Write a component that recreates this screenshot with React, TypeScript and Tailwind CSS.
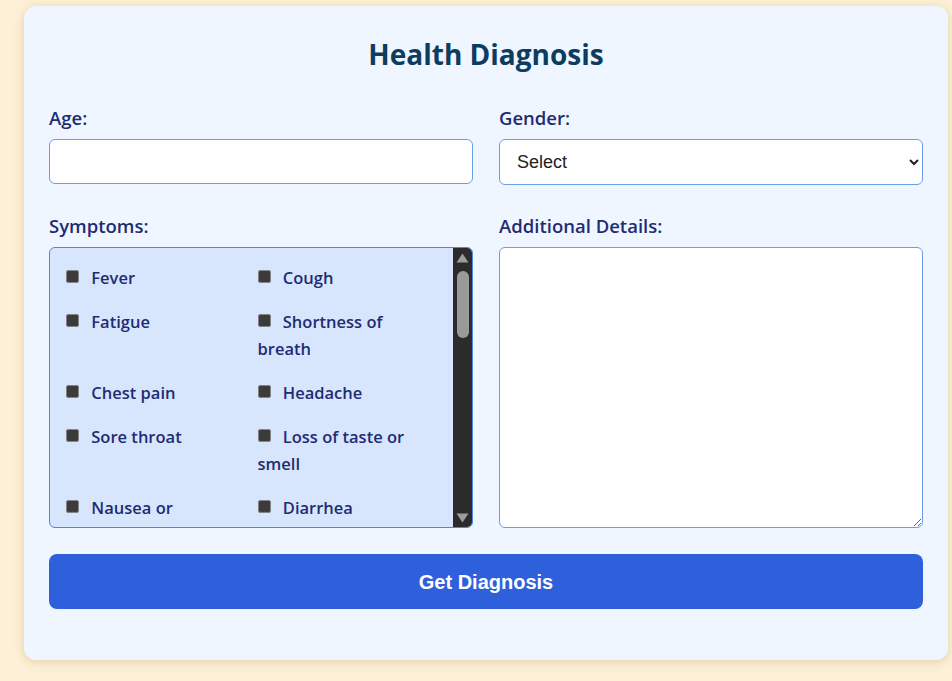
import React from 'react'

const symptoms = [
 'Fever',
 'Cough',
 'Fatigue',
 'Shortness of breath',
 'Chest pain',
 'Headache',
 'Sore throat',
 'Loss of taste or smell',
 'Nausea or vomiting',
 'Diarrhea',
 'Muscle aches',
 'Runny nose',
]

const Label: React.FC<{ text: string; htmlFor?: string }> = ({ text, htmlFor }) => (
 <label htmlFor={htmlFor} className="block text-[18.5px] leading-6 font-semibold text-[#1f2c73]">
  {text}
 </label>
)

const FakeScrollbar = () => (
 <div className="w-[19px] shrink-0 bg-[#2b2b2b] flex flex-col items-center pt-[5px] pb-[4px]">
  <svg width="13" height="10" viewBox="0 0 13 10">
   <path d="M6.5 0.5 L12.5 9.5 L0.5 9.5 Z" fill="#9c9c9c" />
  </svg>
  <div className="mt-[8px] w-[12px] h-[67px] rounded-full bg-[#9a9a9a]" />
  <div className="flex-1" />
  <svg width="13" height="10" viewBox="0 0 13 10">
   <path d="M0.5 0.5 L12.5 0.5 L6.5 9.5 Z" fill="#9c9c9c" />
  </svg>
 </div>
)

export default function App() {
 return (
  <div className="min-h-[681px] bg-[#fdf0d6] pt-[6px] pl-[24px] font-['Open_Sans','Noto_Sans',sans-serif]">
   <div className="w-[924px] rounded-xl bg-[#eff6ff] px-[25px] pt-6 pb-[51px] shadow-[0_2px_10px_rgba(150,120,60,0.25)]">
    <h1 className="text-center text-[28px] leading-[48px] font-bold text-[#0d3c61]">Health Diagnosis</h1>

    <div className="mt-7 grid grid-cols-2 gap-x-[26px]">
     <div>
      <Label text="Age:" htmlFor="age" />
      <input
       id="age"
       type="number"
       className="mt-[9px] block w-full h-[45px] rounded-[6px] border border-[#6b9ee8] bg-white px-4 outline-none"
      />
     </div>
     <div>
      <Label text="Gender:" htmlFor="gender" />
      <select
       id="gender"
       className="mt-[9px] block w-full h-[46px] rounded-[6px] border border-[#6b9ee8] bg-white pl-[13px] pr-2 text-[18px] text-[#222] font-['Liberation_Sans',Arial,sans-serif] outline-none"
      >
       <option>Select</option>
       <option>Male</option>
       <option>Female</option>
       <option>Other</option>
      </select>
     </div>

     <div className="mt-[29px]">
      <Label text="Symptoms:" />
      <div className="mt-[9px] flex h-[281px] overflow-hidden rounded-[6px] border border-[#4f86e4] bg-[#d7e6fd]">
       <div className="flex-1 overflow-hidden px-4 pt-4">
        <div className="grid grid-cols-2 gap-x-3 gap-y-[17px]">
         {symptoms.map((s) => (
          <label key={s} className="text-[16.5px] leading-[27px] font-semibold text-[#1f2c73]">
           <input type="checkbox" className="mr-[8px] w-[13px] h-[13px] align-[1px] [color-scheme:dark]" /> {s}
          </label>
         ))}
        </div>
       </div>
       <FakeScrollbar />
      </div>
     </div>

     <div className="mt-[29px]">
      <Label text="Additional Details:" htmlFor="details" />
      <textarea
       id="details"
       className="mt-[9px] block w-full h-[281px] rounded-[6px] border border-[#6b9ee8] bg-white p-3 outline-none"
      />
     </div>
    </div>

    <button className="mt-[26px] w-full h-[55px] rounded-lg bg-[#2f60dc] text-white text-[20px] font-bold font-['Liberation_Sans',Arial,sans-serif]">
     Get Diagnosis
    </button>
   </div>
  </div>
 )
}
